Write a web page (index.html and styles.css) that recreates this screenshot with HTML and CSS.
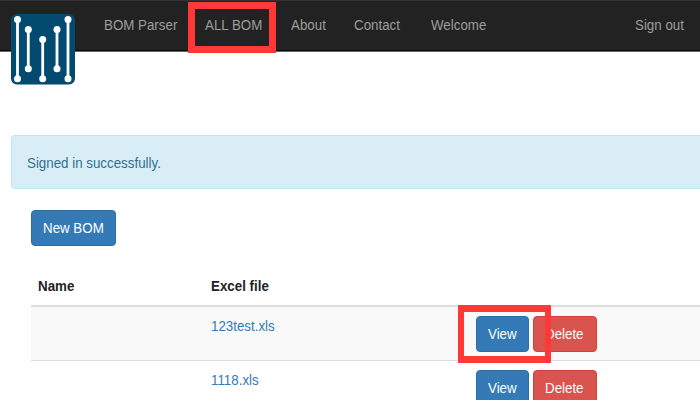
FILE: index.html
```html
<!DOCTYPE html>
<html lang="en">
<head>
<meta charset="utf-8">
<title>All BOM</title>
<link rel="stylesheet" href="styles.css">
</head>
<body>
<header class="navbar">
  <svg class="logo" viewBox="0 0 64 71" width="64" height="71">
    <rect width="64" height="70.5" rx="6" fill="#034a71"/>
    <path d="M6.5 6V65M17.3 16V55M31.7 26V65M46 16V55M57 6V65" stroke="#fff" stroke-width="2.8"/>
    <g fill="#fff">
      <circle cx="6.5" cy="5.5" r="3.5"/><circle cx="6.5" cy="64.8" r="3.5"/>
      <circle cx="17.3" cy="15.6" r="3.5"/><circle cx="17.3" cy="54.8" r="3.5"/>
      <circle cx="31.7" cy="25.6" r="3.5"/><circle cx="31.7" cy="64.8" r="3.5"/>
      <circle cx="46" cy="15.6" r="3.5"/><circle cx="46" cy="54.8" r="3.5"/>
      <circle cx="57" cy="5.5" r="3.5"/><circle cx="57" cy="64.8" r="3.5"/>
    </g>
  </svg>
  <nav class="links">
    <a><span class="t">BOM Parser</span></a>
    <a class="marked"><span class="t">ALL BOM</span></a>
    <a><span class="t">About</span></a>
    <a><span class="t">Contact</span></a>
    <a><span class="t">Welcome</span></a>
    <a><span class="t">Sign out</span></a>
  </nav>
</header>
<div class="alert"><span class="t">Signed in successfully.</span></div>
<main>
  <a class="btn primary new"><span class="t">New BOM</span></a>
  <div class="row head"><b class="t">Name</b><b class="t">Excel file</b></div>
  <div class="row striped">
    <span></span>
    <a class="file"><span class="t">123test.xls</span></a>
    <div class="actions marked-action">
      <a class="btn primary view"><span class="t">View</span></a>
      <a class="btn danger"><span class="t">Delete</span></a>
    </div>
  </div>
  <div class="row">
    <span></span>
    <a class="file"><span class="t">1118.xls</span></a>
    <div class="actions">
      <a class="btn primary view"><span class="t">View</span></a>
      <a class="btn danger"><span class="t">Delete</span></a>
    </div>
  </div>
</main>
</body>
</html>
```
FILE: styles.css
```css
*, *::before, *::after { box-sizing: border-box; }
html, body { height: 400px; overflow: hidden; }
body {
  margin: 0;
  background: #fff;
  color: #333;
  font: 15.5px/20px "Liberation Sans", Arial, sans-serif;
}
.t {
  display: inline-block;
  justify-self: start;
  white-space: nowrap;
  transform: scaleX(.86);
  transform-origin: left center;
}
.navbar {
  display: flex;
  height: 52px;
  padding-left: 11px;
  background: #222;
  border-top: 1px solid #333;
  border-bottom: 1px solid #666;
  box-shadow: inset 0 -1px #080808;
}
.logo { flex: none; margin-top: 13px; }
.links {
  display: grid;
  grid-template-columns: 101px 86px 63.5px 77px 204px 64px;
  margin-left: 28.5px;
  padding-top: 14px;
  color: #9d9d9d;
}
.marked { position: relative; }
.marked::before {
  content: "";
  position: absolute;
  left: -17px;
  top: -13px;
  width: 88px;
  height: 51px;
  border: 7px solid #ff3937;
}
.alert {
  height: 54px;
  margin: 83px 0 0 11px;
  padding: 17px 15px;
  background: #d9edf7;
  border: 1px solid #bce8f1;
  border-right: 0;
  border-radius: 4px 0 0 4px;
  color: #31708f;
}
main { padding: 21px 0 0 31px; }
.btn {
  display: block;
  height: 36px;
  padding: 7px 11px;
  border: 1px solid #2e6da4;
  border-radius: 4px;
  color: #fff;
  line-height: 20px;
}
.primary { background: #337ab7; }
.danger { width: 64px; background: #d9534f; border-color: #d43f3a; }
.view { width: 53px; }
.new { width: 85px; }
.row {
  display: grid;
  grid-template-columns: 173px 265px 1fr;
  height: 54px;
  padding: 9px 0 0 7px;
  border-top: 1px solid #ddd;
}
.head { height: 59px; padding-top: 30px; border: 0; color: #222; }
.striped { height: 55px; background: #f9f9f9; border-top-width: 2px; }
.file { color: #337ab7; }
.actions { display: flex; gap: 4px; }
.marked-action { position: relative; }
.marked-action::after {
  content: "";
  position: absolute;
  left: -18px;
  top: -11px;
  width: 93px;
  height: 58px;
  border: 7px solid #ff3937;
  border-width: 7px 6px;
}
```
